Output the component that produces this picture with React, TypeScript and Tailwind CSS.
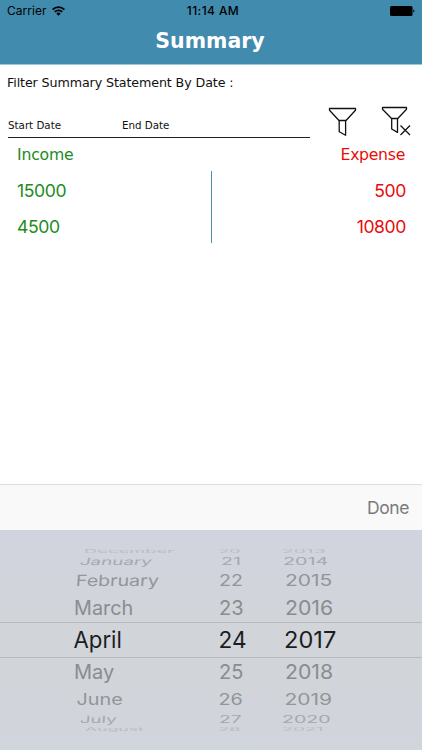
type Cell = { text: string; dx: number; sx: number };

type WheelRow = {
  height: string;
  tone: string;
  sy: number;
  skew: number[];
  cells: Cell[];
};

const wheelRows: WheelRow[] = [
  {
    height: 'h-[9px]',
    tone: 'text-[#b9bcc3]',
    sy: 0.22,
    skew: [0, 0, 0],
    cells: [
      { text: 'December', dx: 10, sx: 0.92 },
      { text: '20', dx: 0, sx: 0.86 },
      { text: '2013', dx: -3, sx: 0.96 },
    ],
  },
  {
    height: 'h-[12px]',
    tone: 'text-[#a5a8ad]',
    sy: 0.5,
    skew: [-14, 0, 0],
    cells: [
      { text: 'January', dx: 6, sx: 0.94 },
      { text: '21', dx: 2, sx: 0.98 },
      { text: '2014', dx: -2, sx: 0.99 },
    ],
  },
  {
    height: 'h-[27px]',
    tone: 'text-[#929599]',
    sy: 0.78,
    skew: [-4, 0, 0],
    cells: [
      { text: 'February', dx: 2, sx: 0.98 },
      { text: '22', dx: 0, sx: 0.98 },
      { text: '2015', dx: 0, sx: 1.05 },
    ],
  },
  {
    height: 'h-7',
    tone: 'text-[#8a8c90]',
    sy: 1,
    skew: [0, 0, 0],
    cells: [
      { text: 'March', dx: 0, sx: 0.99 },
      { text: '23', dx: 0, sx: 1 },
      { text: '2016', dx: 0, sx: 1.06 },
    ],
  },
  {
    height: 'h-9',
    tone: 'text-[#1c1d1f]',
    sy: 1.15,
    skew: [0, 0, 0],
    cells: [
      { text: 'April', dx: -0.5, sx: 1.11 },
      { text: '24', dx: -0.5, sx: 1.13 },
      { text: '2017', dx: -1, sx: 1.18 },
    ],
  },
  {
    height: 'h-7',
    tone: 'text-[#8a8c90]',
    sy: 1,
    skew: [0, 0, 0],
    cells: [
      { text: 'May', dx: 0, sx: 1 },
      { text: '25', dx: 0, sx: 1 },
      { text: '2018', dx: 0, sx: 1.06 },
    ],
  },
  {
    height: 'h-[27px]',
    tone: 'text-[#929599]',
    sy: 0.78,
    skew: [0, 0, 0],
    cells: [
      { text: 'June', dx: 2.5, sx: 0.99 },
      { text: '26', dx: -0.5, sx: 0.99 },
      { text: '2019', dx: -0.5, sx: 1.05 },
    ],
  },
  {
    height: 'h-[12px]',
    tone: 'text-[#a5a8ad]',
    sy: 0.5,
    skew: [-4, 0, 0],
    cells: [
      { text: 'July', dx: 6, sx: 0.93 },
      { text: '27', dx: 0, sx: 0.96 },
      { text: '2020', dx: -3, sx: 0.98 },
    ],
  },
  {
    height: 'h-2',
    tone: 'text-[#b9bcc3]',
    sy: 0.22,
    skew: [0, 0, 0],
    cells: [
      { text: 'August', dx: 11, sx: 0.88 },
      { text: '28', dx: -1, sx: 0.92 },
      { text: '2021', dx: -3, sx: 0.92 },
    ],
  },
];

const StatusBar = () => (
  <div className="flex h-[22px] items-center px-[7px] text-[12px] text-black">
    <div className="flex flex-1 items-center gap-[5px]">
      <span className="tracking-[0.05px]">Carrier</span>
      <svg width="13" height="10" viewBox="0 0 13 10" fill="none" stroke="#000" strokeWidth="1.8">
        <path d="M0.6 3.6a8.3 8.3 0 0 1 11.8 0" />
        <path d="M2.8 5.9a5.2 5.2 0 0 1 7.4 0" />
        <path d="M6.5 9.8 4.3 7.5a3.1 3.1 0 0 1 4.4 0z" fill="#000" stroke="none" />
      </svg>
    </div>
    <span className="pl-[4px] font-medium tracking-[0.4px]">11:14 AM</span>
    <div className="flex flex-1 justify-end">
      <svg width="25" height="10" viewBox="0 0 25 10">
        <rect x="0" y="0" width="22.5" height="10" rx="1.5" />
        <path d="M23.3 3.4a1.7 1.7 0 0 1 0 3.2z" />
      </svg>
    </div>
  </div>
);

const Header = () => (
  <header className="h-[65px] border-b border-[#9cc6d9] bg-[#418bae]">
    <StatusBar />
    <h1 className="pr-[2px] text-center font-['DejaVu_Sans'] text-[20.5px] leading-[38px] font-bold text-white">
      Summary
    </h1>
  </header>
);

const FilterRow = () => (
  <div className="flex h-[40px] pl-2">
    <div className="flex h-[40px] w-[302px] items-end border-b border-[#222] pb-[4px] font-['DejaVu_Sans'] text-[10.3px] leading-[16px] text-[#111]">
      <span className="w-[114px]">Start Date</span>
      <span>End Date</span>
    </div>
    <svg className="ml-[18px] mt-[8px]" width="30" height="32" viewBox="0 0 30 32" fill="none" stroke="#111" strokeWidth="1.3" strokeLinejoin="round">
      <path d="M1.5 2.5h26v1.8L18 14.5h-7L1.5 4.3z" />
      <path d="M11.2 14.5v11.3l6.4 3.4V14.5" />
    </svg>
    <svg className="ml-[23px] mt-[8px]" width="32" height="32" viewBox="0 0 32 32" fill="none" stroke="#111" strokeWidth="1.3" strokeLinejoin="round">
      <path d="M1.5 1.5h24v1.8L16.8 12.5h-6.3L1.5 3.3z" />
      <path d="M10.7 12.5v10.5l5.8 3.4V12.5" />
      <path d="m19.5 19.5 9.5 9.5m0-9.5-9.5 9.5" />
    </svg>
  </div>
);

const Totals = () => (
  <section className="h-[107px] text-[17.6px] tracking-[-0.4px]">
    <div className="flex h-[33px] items-center justify-between px-[17px] font-['DejaVu_Sans'] text-[15.7px]">
      <span className="tracking-[-0.2px] text-[#228b22]">Income</span>
      <span className="tracking-[-0.3px] text-[#ea0b0b]">Expense</span>
    </div>
    <div className="flex h-[72px]">
      <div className="w-[211px] pl-[17px] text-[#228b22]">
        <p className="leading-[40px]">15000</p>
        <p className="leading-[32px]">4500</p>
      </div>
      <div className="w-px bg-[#4a8fb3]" />
      <div className="flex-1 pr-[16px] text-right text-[#ea0b0b]">
        <p className="leading-[40px]">500</p>
        <p className="leading-[32px]">10800</p>
      </div>
    </div>
  </section>
);

const DateWheel = () => (
  <div className="h-[220px] overflow-hidden bg-gradient-to-b from-[#d1d4de] via-[#d1d4d8] to-[#d1d5dc] pt-4">
    {wheelRows.map((row, i) => (
      <div
        key={row.cells[0].text}
        className={`flex items-center pl-[74px] text-[20px] leading-none ${row.height} ${row.tone} ${
          i === 4 ? 'border-y border-[#b5b8bd]' : ''
        }`}
      >
        {row.cells.map((cell, c) => (
          <div key={cell.text} className={c === 0 ? 'w-[145px]' : 'w-[66px]'}>
            <span
              className="inline-block origin-left"
              style={{
                transform: `translateX(${cell.dx}px) skewX(${row.skew[c]}deg) scale(${cell.sx}, ${row.sy})`,
              }}
            >
              {cell.text}
            </span>
          </div>
        ))}
      </div>
    ))}
  </div>
);

const App = () => {
  return (
    <div className="flex h-[750px] w-[422px] flex-col overflow-hidden bg-white font-['Inter',sans-serif]">
      <Header />
      <main className="flex-1">
        <p className="h-[33px] pl-[7px] font-['DejaVu_Sans'] text-[12.7px] leading-[35px] tracking-[-0.12px] text-[#111]">
          Filter Summary Statement By Date :
        </p>
        <FilterRow />
        <Totals />
      </main>
      <div className="flex h-[46px] items-center justify-end border-t border-[#dcdcdc] bg-[#f9f9f9] pt-px pr-[13px] text-[17.5px] tracking-[-0.4px] text-[#7b7b7b]">
        <button>Done</button>
      </div>
      <DateWheel />
    </div>
  );
};

export default App;
